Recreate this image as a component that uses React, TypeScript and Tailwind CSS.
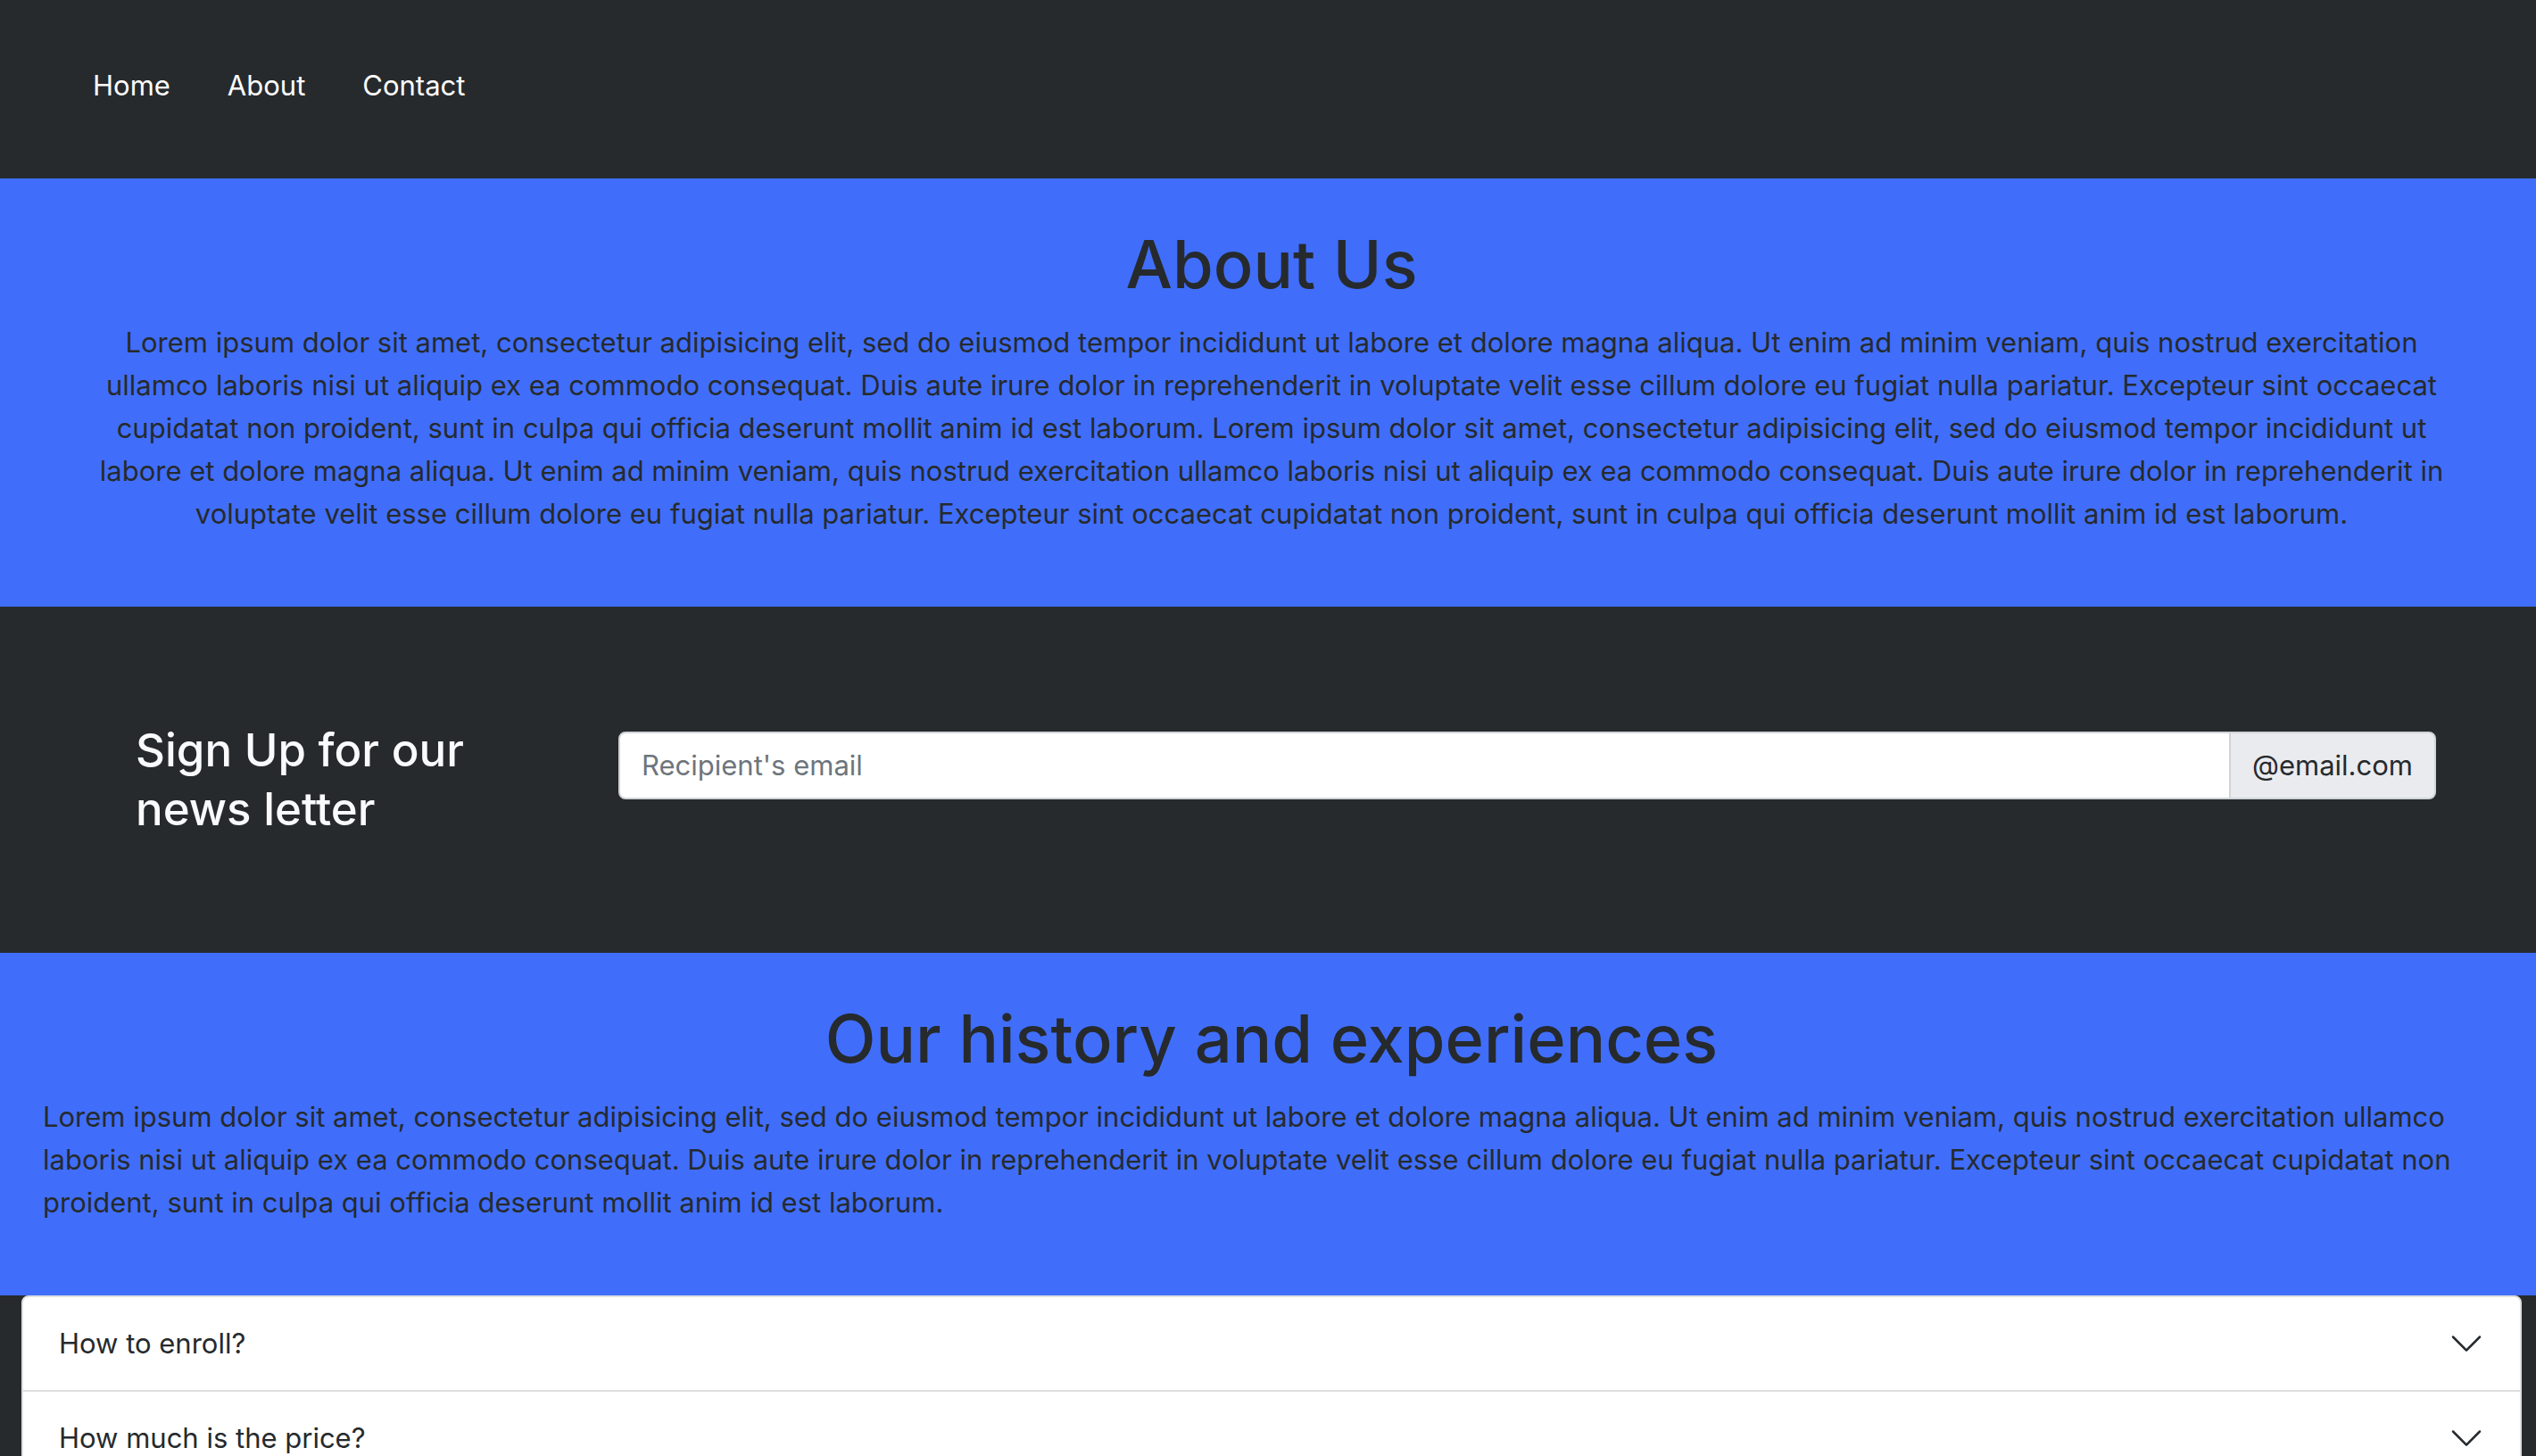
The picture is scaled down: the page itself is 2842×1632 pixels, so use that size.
import { useState } from "react";

const LOREM =
  "Lorem ipsum dolor sit amet, consectetur adipisicing elit, sed do eiusmod tempor incididunt ut labore et dolore magna aliqua. Ut enim ad minim veniam, quis nostrud exercitation ullamco laboris nisi ut aliquip ex ea commodo consequat. Duis aute irure dolor in reprehenderit in voluptate velit esse cillum dolore eu fugiat nulla pariatur. Excepteur sint occaecat cupidatat non proident, sunt in culpa qui officia deserunt mollit anim id est laborum.";

const NAV = ["Home", "About", "Contact"];
const QUESTIONS = ["How to enroll?", "How much is the price?"];

function Chevron({ open }: { open: boolean }) {
  return (
    <svg
      viewBox="0 0 16 16"
      className={open ? "size-10 shrink-0 rotate-180" : "size-10 shrink-0"}
      fill="currentColor"
      aria-hidden="true"
    >
      <path
        fillRule="evenodd"
        d="M1.646 4.646a.5.5 0 0 1 .708 0L8 10.293l5.646-5.647a.5.5 0 0 1 .708.708l-6 6a.5.5 0 0 1-.708 0l-6-6a.5.5 0 0 1 0-.708z"
      />
    </svg>
  );
}

export default function App() {
  const [open, setOpen] = useState<number | null>(null);

  return (
    <div className="h-screen overflow-x-hidden overflow-y-auto bg-[#262a2d] font-['Inter',sans-serif] text-[31px] leading-[48px] text-[#262a2d] [scrollbar-width:none]">
      <header className="px-[72px] pt-[72px] pb-20">
        <nav className="flex text-white">
          {NAV.map((item) => (
            <a key={item} href="#" className="px-8">
              {item}
            </a>
          ))}
        </nav>
      </header>

      <section className="bg-[#406efa] pt-12 pr-[100px] pb-20 pl-[108px] text-center">
        <h1 className="mb-4 text-[74px] leading-24 font-medium">About Us</h1>
        <p>{`${LOREM} ${LOREM}`}</p>
      </section>

      <section className="flex items-start pt-32 pr-28 pb-32 pl-[152px]">
        <h3 className="w-[541px] shrink-0 pr-24 text-[51px] leading-[66px] font-medium text-[#f9fafb]">
          Sign Up for our news letter
        </h3>
        <form className="mt-3 flex grow" onSubmit={(e) => e.preventDefault()}>
          <input
            type="text"
            aria-label="Recipient's email"
            aria-describedby="email-domain"
            placeholder="Recipient's email"
            className="min-w-0 grow rounded-l-lg border-2 border-[#d0d4d9] bg-white px-6 py-3 outline-none placeholder:text-[#6e757c]"
          />
          <span
            id="email-domain"
            className="-ml-0.5 rounded-r-lg border-2 border-[#d0d4d9] bg-[#eaebef] px-6 py-3"
          >
            @email.com
          </span>
        </form>
      </section>

      <section className="bg-[#406efa] pt-12 pr-10 pb-20 pl-12">
        <h1 className="mb-4 text-center text-[74px] leading-24 font-medium">
          Our history and experiences
        </h1>
        <p>{LOREM}</p>
      </section>

      <section className="pr-4 pl-6">
        <div className="overflow-hidden rounded-t-lg border-2 border-[#dfdfdf] bg-white">
          {QUESTIONS.map((question, i) => (
            <div key={question} className="border-b-2 border-[#dfdfdf]">
              <h2>
                <button
                  type="button"
                  aria-expanded={open === i}
                  onClick={() => setOpen(open === i ? null : i)}
                  className="flex w-full items-center justify-between px-10 py-7 text-left"
                >
                  {question}
                  <Chevron open={open === i} />
                </button>
              </h2>
              {open === i && <p className="px-10 py-8">{LOREM}</p>}
            </div>
          ))}
        </div>
      </section>
    </div>
  );
}
